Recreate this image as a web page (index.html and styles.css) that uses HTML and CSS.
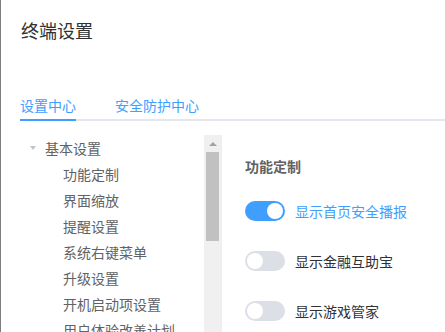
FILE: index.html
```html
<!DOCTYPE html>
<html lang="zh-CN">
<head>
<meta charset="UTF-8">
<meta name="viewport" content="width=device-width, initial-scale=1.0">
<title>终端设置</title>
<link rel="stylesheet" href="styles.css">
</head>
<body>
<div class="dialog">
  <h1 class="title">终端设置</h1>

  <div class="tabs">
    <a class="tab active" href="javascript:void(0)">设置中心</a>
    <a class="tab" href="javascript:void(0)">安全防护中心</a>
  </div>

  <div class="content">
    <div class="side">
      <ul class="tree">
        <li class="node"><span class="caret"></span>基本设置</li>
        <li class="leaf">功能定制</li>
        <li class="leaf">界面缩放</li>
        <li class="leaf">提醒设置</li>
        <li class="leaf">系统右键菜单</li>
        <li class="leaf">升级设置</li>
        <li class="leaf">开机启动项设置</li>
        <li class="leaf">用户体验改善计划</li>
      </ul>
      <div class="scrollbar">
        <span class="arrow"></span>
        <span class="thumb"></span>
      </div>
    </div>

    <div class="panel">
      <h2 class="section">功能定制</h2>
      <label class="option on"><span class="switch"></span>显示首页安全播报</label>
      <label class="option"><span class="switch"></span>显示金融互助宝</label>
      <label class="option"><span class="switch"></span>显示游戏管家</label>
    </div>
  </div>
</div>
</body>
</html>
```

FILE: styles.css
```css
html, body {
  margin: 0;
  height: 100%;
  overflow: hidden;
}
body {
  font-family: "Noto Sans CJK SC", "Noto Sans", sans-serif;
  background-color: #fff;
  border-left: 1px solid #7d7d7d;
  box-sizing: border-box;
}
.dialog {
  height: 100%;
  display: flex;
  flex-direction: column;
}
.title {
  margin: 0;
  padding: 18px 0 0 20px;
  font-size: 18px;
  line-height: 24px;
  font-weight: normal;
  color: #303133;
}
.tabs {
  display: flex;
  gap: 39px;
  margin: 53px 0 0 19px;
  border-bottom: 2px solid #e4e7ed;
}
.tab {
  font-size: 14px;
  line-height: 20px;
  padding-bottom: 4px;
  margin-bottom: -2px;
  color: #409eff;
  text-decoration: none;
  border-bottom: 2px solid transparent;
}
.tab.active {
  border-bottom-color: #409eff;
}
.content {
  flex: 1;
  display: flex;
  margin: 14px 0 0 19px;
  min-height: 0;
}
.side {
  width: 201px;
  display: flex;
}
.tree {
  flex: 1;
  list-style: none;
  margin: 0;
  padding: 0 0 0 10px;
  font-size: 14px;
  line-height: 26px;
  color: #606266;
  overflow: hidden;
  white-space: nowrap;
}
.node {
  display: flex;
  align-items: center;
}
.caret {
  width: 0;
  height: 0;
  border-left: 3px solid transparent;
  border-right: 3px solid transparent;
  border-top: 4px solid #c0c4cc;
  margin-right: 9px;
}
.leaf {
  padding-left: 33px;
}
.scrollbar {
  width: 17px;
  background-color: #f0f0f0;
  display: flex;
  flex-direction: column;
  align-items: center;
}
.arrow {
  width: 0;
  height: 0;
  border-left: 4px solid transparent;
  border-right: 4px solid transparent;
  border-bottom: 4px solid #a3a3a3;
  margin-top: 7px;
}
.thumb {
  width: 13px;
  height: 89px;
  margin-top: 6px;
  background-color: #c1c1c1;
}
.panel {
  flex: 1;
  border-left: 1px solid #ebeef5;
  padding: 21px 0 0 23px;
}
.section {
  margin: 0 0 25px;
  font-size: 14px;
  line-height: 20px;
  font-weight: bold;
  color: #606266;
}
.option {
  display: flex;
  align-items: center;
  height: 20px;
  margin-bottom: 30px;
  font-size: 14px;
  color: #303133;
  cursor: pointer;
}
.switch {
  position: relative;
  width: 40px;
  height: 20px;
  border-radius: 10px;
  background-color: #dcdfe6;
  margin-right: 10px;
}
.switch::after {
  content: "";
  position: absolute;
  top: 2px;
  left: 2px;
  width: 16px;
  height: 16px;
  border-radius: 50%;
  background-color: #fff;
}
.option.on {
  color: #409eff;
}
.option.on .switch {
  background-color: #409eff;
}
.option.on .switch::after {
  left: 22px;
}
```
